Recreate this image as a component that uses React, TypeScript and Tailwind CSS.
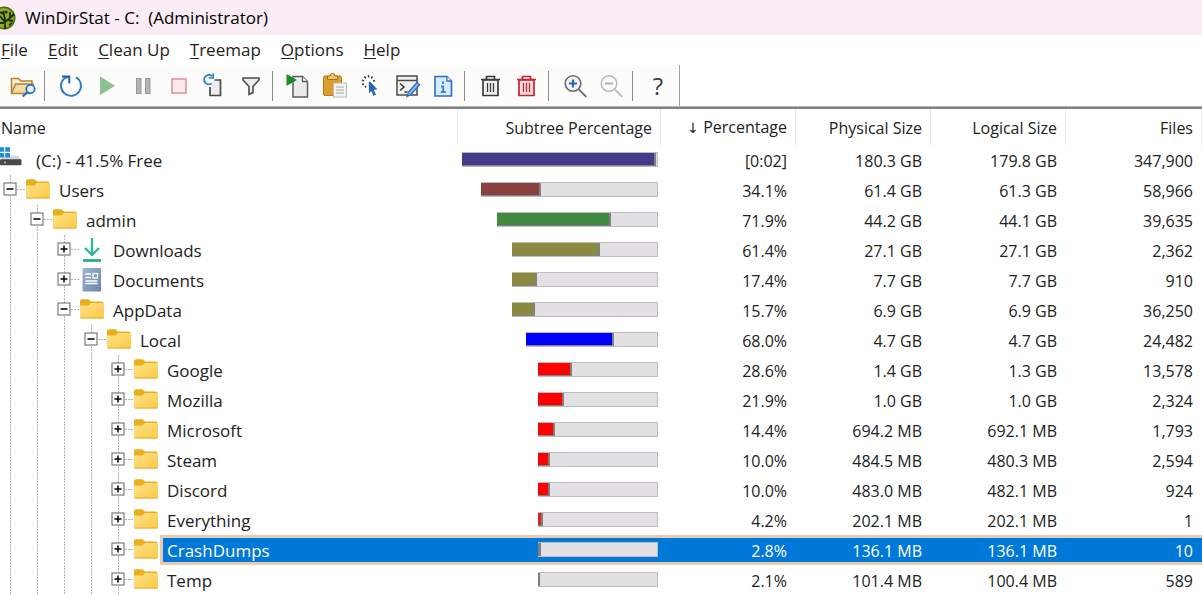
import type { ReactNode } from "react";

interface TreeItem {
    name: string;
    depth: number;
    icon: "drive" | "folder" | "downloads" | "documents";
    open?: boolean;
    selected?: boolean;
    barWidth: string;
    barColor: string;
    fill: number;
    percentage: string;
    physical: string;
    logical: string;
    files: string;
}

const BAR = {
    root: "w-[196px]",
    l1: "w-[177px]",
    l2: "w-[161px]",
    l3: "w-[146px]",
    l4: "w-[132px]",
    l5: "w-[120px]",
};

const ITEMS: TreeItem[] = [
    { name: "(C:) - 41.5% Free", depth: 0, icon: "drive", barWidth: BAR.root, barColor: "bg-[#453b8c]", fill: 100, percentage: "[0:02]", physical: "180.3 GB", logical: "179.8 GB", files: "347,900" },
    { name: "Users", depth: 1, icon: "folder", open: true, barWidth: BAR.l1, barColor: "bg-[#8b4040]", fill: 34.1, percentage: "34.1%", physical: "61.4 GB", logical: "61.3 GB", files: "58,966" },
    { name: "admin", depth: 2, icon: "folder", open: true, barWidth: BAR.l2, barColor: "bg-[#408b40]", fill: 71.9, percentage: "71.9%", physical: "44.2 GB", logical: "44.1 GB", files: "39,635" },
    { name: "Downloads", depth: 3, icon: "downloads", barWidth: BAR.l3, barColor: "bg-[#8b8b40]", fill: 61.4, percentage: "61.4%", physical: "27.1 GB", logical: "27.1 GB", files: "2,362" },
    { name: "Documents", depth: 3, icon: "documents", barWidth: BAR.l3, barColor: "bg-[#8b8b40]", fill: 17.4, percentage: "17.4%", physical: "7.7 GB", logical: "7.7 GB", files: "910" },
    { name: "AppData", depth: 3, icon: "folder", open: true, barWidth: BAR.l3, barColor: "bg-[#8b8b40]", fill: 15.7, percentage: "15.7%", physical: "6.9 GB", logical: "6.9 GB", files: "36,250" },
    { name: "Local", depth: 4, icon: "folder", open: true, barWidth: BAR.l4, barColor: "bg-[#0000ff]", fill: 68, percentage: "68.0%", physical: "4.7 GB", logical: "4.7 GB", files: "24,482" },
    { name: "Google", depth: 5, icon: "folder", barWidth: BAR.l5, barColor: "bg-[#ff0000]", fill: 28.6, percentage: "28.6%", physical: "1.4 GB", logical: "1.3 GB", files: "13,578" },
    { name: "Mozilla", depth: 5, icon: "folder", barWidth: BAR.l5, barColor: "bg-[#ff0000]", fill: 21.9, percentage: "21.9%", physical: "1.0 GB", logical: "1.0 GB", files: "2,324" },
    { name: "Microsoft", depth: 5, icon: "folder", barWidth: BAR.l5, barColor: "bg-[#ff0000]", fill: 14.4, percentage: "14.4%", physical: "694.2 MB", logical: "692.1 MB", files: "1,793" },
    { name: "Steam", depth: 5, icon: "folder", barWidth: BAR.l5, barColor: "bg-[#ff0000]", fill: 10, percentage: "10.0%", physical: "484.5 MB", logical: "480.3 MB", files: "2,594" },
    { name: "Discord", depth: 5, icon: "folder", barWidth: BAR.l5, barColor: "bg-[#ff0000]", fill: 10, percentage: "10.0%", physical: "483.0 MB", logical: "482.1 MB", files: "924" },
    { name: "Everything", depth: 5, icon: "folder", barWidth: BAR.l5, barColor: "bg-[#e02020]", fill: 4.2, percentage: "4.2%", physical: "202.1 MB", logical: "202.1 MB", files: "1" },
    { name: "CrashDumps", depth: 5, icon: "folder", selected: true, barWidth: BAR.l5, barColor: "bg-[#808080]", fill: 2.8, percentage: "2.8%", physical: "136.1 MB", logical: "136.1 MB", files: "10" },
    { name: "Temp", depth: 5, icon: "folder", barWidth: BAR.l5, barColor: "bg-[#808080]", fill: 2.1, percentage: "2.1%", physical: "101.4 MB", logical: "100.4 MB", files: "589" },
];

const MENU = ["File", "Edit", "Clean Up", "Treemap", "Options", "Help"];

function AppLogo() {
    return (
        <svg className="w-[16px] h-[24px] shrink-0" viewBox="0 0 16 24">
            <circle cx="4" cy="12" r="11.5" fill="#4d6b12" />
            <circle cx="4" cy="12" r="10" fill="#8fae1c" />
            <path
                d="M5 23V13M5 16l6-5M5 13L3 5M8 14l5 1M0 10l5 6M10 12V6M0 17h4M3 8L0 6M11 11l3-3M9 19l3-2"
                stroke="#1e2a05"
                strokeWidth="1.8"
                fill="none"
            />
            <circle cx="6" cy="6" r="1.6" fill="#1e2a05" />
        </svg>
    );
}

interface ToolProps {
    label: string;
    children: ReactNode;
}

function Tool({ label, children }: Readonly<ToolProps>) {
    return (
        <button type="button" aria-label={label} className="w-9 h-9 shrink-0">
            <svg className="w-9 h-9" viewBox="0 0 36 36" fill="none">
                {children}
            </svg>
        </button>
    );
}

function Separator() {
    return (
        <div className="w-3 h-[30px] shrink-0 pl-1">
            <div className="w-px h-full bg-[#8a8a8a]" />
        </div>
    );
}

function Trash({ stroke, fill }: Readonly<{ stroke: string; fill: string }>) {
    return (
        <g stroke={stroke} strokeWidth="1.7">
            <path d="M11 12h15v15.500h-15z" fill={fill} />
            <path d="M9 11.500h19M14.500 11V8.500h8V11" />
            <path d="M15.500 15v9M18.500 15v9M21.500 15v9" strokeWidth="1.300" />
        </g>
    );
}

function Toolbar() {
    return (
        <div className="flex bg-[#fcfcfb] h-[42px] border-b border-[#b8b8b8]">
            <div className="flex items-center pl-1 pr-[3px] border-r border-[#a0a0a0]">
                <Tool label="Open">
                    <path d="M7.500 25V10.500h7l2.500 2.500h11v3" stroke="#b5822f" strokeWidth="1.500" fill="#f9ecd2" />
                    <path d="M7.500 25.500l4-9.500H29l-2.500 9.500z" stroke="#b5822f" strokeWidth="1.500" fill="#f3d9a4" />
                    <circle cx="26.500" cy="21" r="4.200" stroke="#2a6fc4" strokeWidth="1.800" fill="#eaf3fc" />
                    <path d="M23.500 24l-4.800 4.500" stroke="#2a6fc4" strokeWidth="2.200" />
                </Tool>
                <Separator />
                <Tool label="Refresh all">
                    <path d="M24 9.200A10 10 0 1 1 12.300 10.400L17 8.500" stroke="#2f7cc8" strokeWidth="1.900" />
                    <path d="M10 8.500h7.300v7" stroke="#1f5fa8" strokeWidth="1.900" />
                </Tool>
                <Tool label="Resume">
                    <path d="M12 8.500l15 9.300-15 9.200z" fill="#8dbf93" />
                </Tool>
                <Tool label="Pause">
                    <rect x="12.500" y="10.500" width="4.500" height="15" fill="#b4b4b4" stroke="#989898" />
                    <rect x="21.500" y="10.500" width="4.500" height="15" fill="#b4b4b4" stroke="#989898" />
                </Tool>
                <Tool label="Stop">
                    <rect x="12" y="11" width="14" height="14" fill="#fce9eb" stroke="#e68a9a" strokeWidth="1.500" />
                </Tool>
                <Tool label="Refresh selected">
                    <path d="M18.500 12H24.500v15.500H14V19" fill="#ececec" stroke="#4a4a4a" strokeWidth="1.700" />
                    <path d="M16 8.200A4.700 4.700 0 1 0 15.600 15.500" stroke="#2f7cc8" strokeWidth="1.800" />
                    <path d="M17.200 5.500v4.500h-4.500" stroke="#2f7cc8" strokeWidth="1.700" />
                </Tool>
                <Tool label="Filter">
                    <path d="M11 10h16v2l-6 6.500v6L17 26.500v-8L11 12z" fill="#ececec" stroke="#4a4a4a" strokeWidth="1.600" />
                </Tool>
                <Separator />
                <Tool label="Open item">
                    <path d="M13 8.500h9.500l5 5V29H13z" fill="#ececec" stroke="#5c5c5c" strokeWidth="1.500" />
                    <path d="M22.500 8.500v5h5" fill="#fff" stroke="#5c5c5c" strokeWidth="1.300" />
                    <path d="M6.500 6l10.500 6-10.500 6z" fill="#1f8a2b" />
                </Tool>
                <Tool label="Copy path">
                    <rect x="7.500" y="8" width="18" height="19.500" rx="1.500" fill="#dc9f2c" stroke="#b67d1c" />
                    <path d="M11.500 11.500V8h2.500a2.500 2.500 0 0 1 5 0H21.500v3.500z" fill="#efc568" stroke="#a8701a" />
                    <rect x="17.500" y="15" width="13" height="14" fill="#f4f4f4" stroke="#bcbcbc" />
                    <path d="M20 19h8M20 22h8M20 25h8" stroke="#a8a8a8" />
                </Tool>
                <Tool label="Select">
                    <path
                        d="M16.500 7v2.500M12.500 8.500l1.300 2M20.500 8.500l-1.300 2M10 12l2 .8M10 16.500l2-.6M13 19.500l1-1.500M23 12.500l-2 .6"
                        stroke="#333"
                        strokeWidth="1.400"
                    />
                    <path d="M18 13.500l7.500 8-3.800.2 2.300 5-2.500 1.100-2.200-4.800-2.300 2.500-.2-11.500z" fill="#2567b8" />
                </Tool>
                <Tool label="Command prompt">
                    <rect x="9" y="8" width="20" height="19" fill="#f1f1f1" stroke="#4a4a4a" strokeWidth="1.500" />
                    <path d="M9 12.500h20" stroke="#4a4a4a" strokeWidth="1.500" />
                    <path d="M12 15.500l4 3.500-4 3.500M16.500 24h3" stroke="#333" strokeWidth="1.500" />
                    <path d="M19 28.500l1.500-4.500 8.500-9.500 2.500 2.300-8.500 9.700z" fill="#8cb8ea" stroke="#2f6dbd" strokeWidth="1.300" />
                </Tool>
                <Tool label="Properties">
                    <path d="M11 8.500h12l4.500 4.500v15H11z" fill="#d9eafa" stroke="#2a6fc4" strokeWidth="1.600" />
                    <path d="M23 8.500V13h4.500" stroke="#2a6fc4" strokeWidth="1.300" fill="#fff" />
                    <path d="M19 13.500V16M17 18.500h2.200V24M16.800 24h5" stroke="#4a82c8" strokeWidth="1.900" />
                </Tool>
                <Separator />
                <Tool label="Move to recycle bin">
                    <Trash stroke="#3c3c3c" fill="#f0f0f0" />
                </Tool>
                <Tool label="Delete permanently">
                    <Trash stroke="#cf2233" fill="#fbdfe1" />
                </Tool>
                <Separator />
                <Tool label="Zoom in">
                    <circle cx="17" cy="15.500" r="7.800" stroke="#6a6a6a" strokeWidth="1.600" fill="#f3f5f6" />
                    <path d="M22.800 21.300l7.500 7.500" stroke="#6a6a6a" strokeWidth="1.900" />
                    <path d="M17 11.500v8M13 15.500h8" stroke="#2567b8" strokeWidth="2.200" />
                </Tool>
                <Tool label="Zoom out">
                    <circle cx="17" cy="15.500" r="7.800" stroke="#b8b8b8" strokeWidth="1.500" fill="#f8f9f9" />
                    <path d="M22.800 21.300l7.500 7.500" stroke="#b8b8b8" strokeWidth="1.800" />
                    <path d="M13 15.500h8" stroke="#a0acb8" strokeWidth="1.800" />
                </Tool>
                <Separator />
                <button
                    type="button"
                    className="w-9 h-9 text-2xl leading-9 font-medium text-[#404040]"
                >
                    ?
                </button>
            </div>
            <div className="flex-1 bg-white" />
        </div>
    );
}

function Guide() {
    return (
        <svg className="w-[27px] h-[30px] shrink-0" viewBox="0 0 27 30">
            <path d="M10.500 0v30" stroke="#b4b4bc" strokeDasharray="2 1" />
        </svg>
    );
}

function Expander({ name, open }: Readonly<{ name: string; open?: boolean }>) {
    return (
        <button
            type="button"
            aria-label={open ? `Collapse ${name}` : `Expand ${name}`}
            className="w-[26px] h-[30px] shrink-0"
        >
            <svg className="w-[26px] h-[30px]" viewBox="0 0 26 30" fill="none">
                <path d="M10.500 0v30M17 14.500h9" stroke="#b4b4bc" strokeDasharray="2 1" />
                <rect x="4" y="8" width="12" height="12" fill="#fff" stroke="#7c7c80" strokeWidth="1.200" />
                <path d="M6.500 14h7" stroke="#111" strokeWidth="1.600" />
                {!open && <path d="M10 10.500v7" stroke="#111" strokeWidth="1.600" />}
            </svg>
        </button>
    );
}

function ItemIcon({ icon }: Readonly<{ icon: TreeItem["icon"] }>) {
    if (icon === "drive") {
        return (
            <svg className="w-[22px] h-[30px] shrink-0" viewBox="0 0 22 30">
                <path d="M3 10.500h15l3 4.500H0z" fill="#d3d6da" />
                <rect x="0" y="14.200" width="21.500" height="6" rx="1" fill="#46484c" />
                <circle cx="5" cy="17.500" r="1" fill="#d8c46a" />
                <path d="M0 2.200h4v4.600H0zM5.200 2.200h4.800v4.600H5.200zM0 8h4v4.600H0zM5.200 8h4.800v4.600H5.200z" fill="#1f8fd6" />
            </svg>
        );
    }
    if (icon === "downloads") {
        return (
            <svg className="w-6 h-[30px] shrink-0" viewBox="0 0 24 30" fill="none">
                <path d="M12 3v17M5 13l7 7 7-7" stroke="#2db795" strokeWidth="2.300" />
                <path d="M3 25.500h18" stroke="#22a884" strokeWidth="2.600" />
            </svg>
        );
    }
    if (icon === "documents") {
        return (
            <svg className="w-6 h-[30px] shrink-0" viewBox="0 0 24 30" fill="none">
                <defs>
                    <linearGradient id="docFill" x1="0" y1="0" x2="1" y2="1">
                        <stop offset="0" stopColor="#9fb6d2" />
                        <stop offset="1" stopColor="#6a86ac" />
                    </linearGradient>
                </defs>
                <rect x="2.500" y="3" width="18.500" height="23.500" rx="1.500" fill="url(#docFill)" />
                <path d="M5.500 9h5.500M5.500 12.500h5.500M5.500 16h12M5.500 18.500h12" stroke="#fff" strokeWidth="1.300" />
                <rect x="13" y="8.500" width="4.500" height="4.500" stroke="#fff" strokeWidth="1.300" />
            </svg>
        );
    }
    return (
        <svg className="w-6 h-[30px] shrink-0" viewBox="0 0 24 30">
            <defs>
                <linearGradient id="folderFill" x1="0" y1="0" x2="1" y2="1">
                    <stop offset="0" stopColor="#ffe28c" />
                    <stop offset="1" stopColor="#fac944" />
                </linearGradient>
            </defs>
            <path d="M0 6a1.800 1.800 0 0 1 1.800-1.800H8.500l2.500 2.300h11a1.500 1.500 0 0 1 1.500 1.500v8H0z" fill="#e9ae1c" />
            <path d="M0 10.500h8.500L11 8h11.500A1.500 1.500 0 0 1 24 9.500V22a1.500 1.500 0 0 1-1.500 1.500h-21A1.500 1.500 0 0 1 0 22z" fill="url(#folderFill)" />
            <path d="M.500 23h23" stroke="#e3ae35" />
        </svg>
    );
}

function Row({ item }: Readonly<{ item: TreeItem }>) {
    const guides = Array.from({ length: Math.max(item.depth - 1, 0) });
    const highlight = item.selected
        ? "border-y-3 border-[#e9cbb0] bg-[#0078d7] text-white"
        : "";
    const cell = `h-[30px] p-0 pt-px pr-[9px] text-right ${highlight}`;

    return (
        <tr>
            <td className="h-[30px] p-0 text-[17px]">
                <div className="flex h-[30px] items-center">
                    {guides.map((_, i) => (
                        <Guide key={i} />
                    ))}
                    {item.depth > 0 && <Expander name={item.name} open={item.open} />}
                    <ItemIcon icon={item.icon} />
                    {item.selected ? (
                        <span className="flex-1 flex items-center h-[30px] ml-[2px] pl-1 pt-px border-y-3 border-l-3 border-[#e9cbb0] bg-[#0078d7] text-white">
                            {item.name}
                        </span>
                    ) : (
                        <span className={item.depth === 0 ? "pl-[14px] pt-px" : "pl-[9px] pt-px"}>
                            {item.name}
                        </span>
                    )}
                </div>
            </td>
            <td className={`h-[30px] p-0 pr-[3px] pb-px ${highlight}`}>
                <div className="flex justify-end">
                    <div className={`${item.barWidth} h-[15px] border border-[#bdbdc0] bg-[#e2e0e2]`}>
                        <div
                            className={`${item.barColor} h-full -ml-px border-r-2 border-b border-[#808080]`}
                            style={{ width: `${item.fill}%` }}
                        />
                    </div>
                </div>
            </td>
            <td className={cell}>{item.percentage}</td>
            <td className={cell}>{item.physical}</td>
            <td className={cell}>{item.logical}</td>
            <td className={cell}>{item.files}</td>
        </tr>
    );
}

export default function App() {
    const head = "h-9 p-0 pt-px pr-2 text-right font-normal border-r border-[#e4e8f0]";

    return (
        <div className="w-full bg-white text-base leading-5 text-[#222] font-['Open_Sans',sans-serif]">
            <header className="flex items-center h-[35px] gap-[9px] bg-[#f9ecf5] text-[17px] text-black">
                <AppLogo />
                <h1 className="whitespace-pre">{"WinDirStat - C:  (Administrator)"}</h1>
            </header>
            <nav className="flex items-center h-[30px] gap-5 pl-px text-[17px]">
                {MENU.map((label) => (
                    <button key={label} type="button">
                        <span className="underline underline-offset-2">{label[0]}</span>
                        {label.slice(1)}
                    </button>
                ))}
            </nav>
            <Toolbar />
            <div className="h-[2px] bg-[#808080]" />
            <table className="w-full table-fixed border-separate border-spacing-0 whitespace-nowrap">
                <thead>
                    <tr>
                        <th className="h-9 p-0 pt-px pl-px text-left font-normal border-r border-[#e4e8f0]">
                            Name
                        </th>
                        <th className={`${head} w-[203px]`}>Subtree Percentage</th>
                        <th className={`${head} w-[135px]`}>
                            <span className="font-['DejaVu_Sans'] text-sm">↓</span> Percentage
                        </th>
                        <th className={`${head} w-[135px]`}>Physical Size</th>
                        <th className={`${head} w-[135px]`}>Logical Size</th>
                        <th className={`${head} w-[136px]`}>Files</th>
                    </tr>
                </thead>
                <tbody>
                    {ITEMS.map((item) => (
                        <Row key={item.name} item={item} />
                    ))}
                </tbody>
            </table>
        </div>
    );
}
